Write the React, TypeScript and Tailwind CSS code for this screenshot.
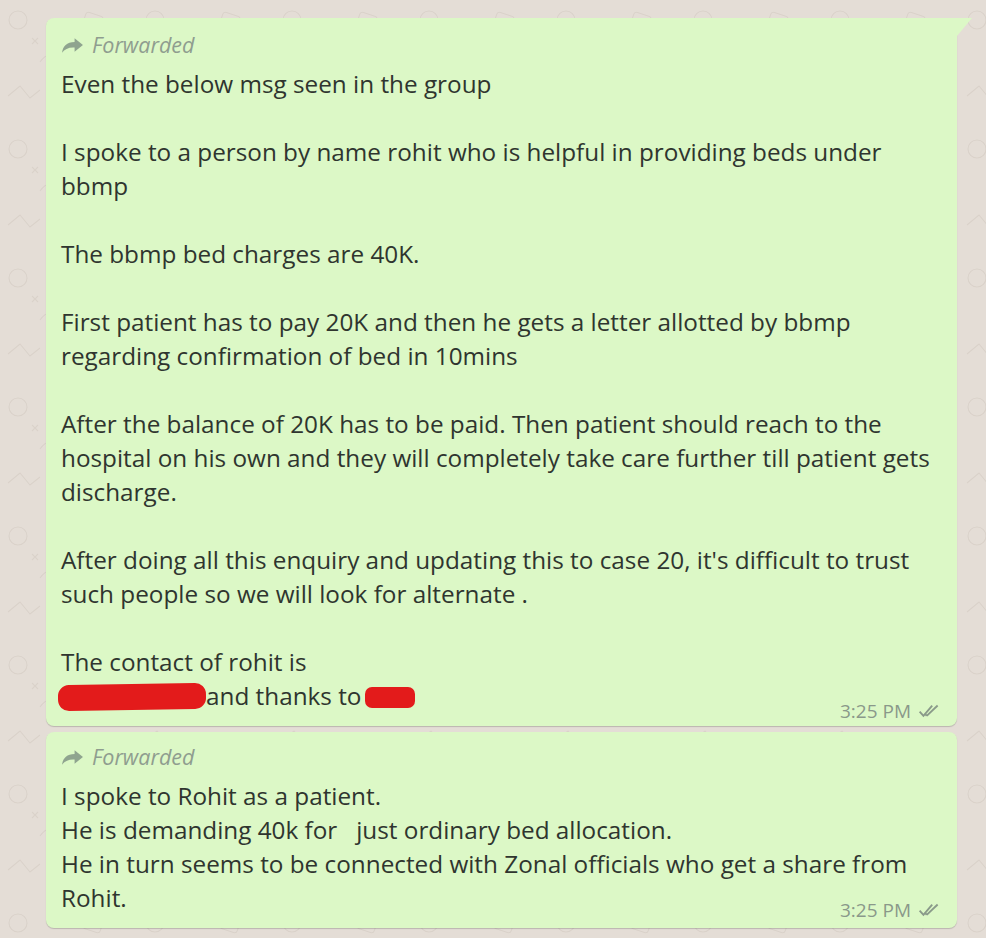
import React from 'react'

const first: string[][] = [
  ['Even the below msg seen in the group'],
  ['I spoke to a person by name rohit who is helpful in providing beds under', 'bbmp'],
  ['The bbmp bed charges are 40K.'],
  ['First patient has to pay 20K and then he gets a letter allotted by bbmp', 'regarding confirmation of bed in 10mins'],
  [
    'After the balance of 20K has to be paid. Then patient should reach to the',
    'hospital on his own and they will completely take care further till patient gets',
    'discharge.',
  ],
  ["After doing all this enquiry and updating this to case 20, it's difficult to trust", 'such people so we will look for alternate .'],
]

const second = [
  'I spoke to Rohit as a patient.',
  'He is demanding 40k for \u00a0 just ordinary bed allocation.',
  'He in turn seems to be connected with Zonal officials who get a share from',
  'Rohit.',
]

function ForwardIcon() {
  return (
    <svg width="23" height="17" viewBox="0 0 22 16" className="shrink-0">
      <path d="M13 1 L21 7.5 L13 14 L13 10 C7.5 9.6 3.5 11.5 1 15 C1.8 8.5 5.5 4.8 13 4.6 Z" fill="#8fa48f" />
    </svg>
  )
}

function Ticks() {
  return (
    <svg width="24" height="16" viewBox="0 0 22 14" className="shrink-0">
      <path d="M1.5 7.5 L5 11.5 L13 2" stroke="#8a9a8a" strokeWidth="1.7" fill="none" />
      <path d="M8 11.5 L18 2" stroke="#8a9a8a" strokeWidth="1.7" fill="none" />
      <path d="M6.5 9.5 L8 11.5" stroke="#8a9a8a" strokeWidth="1.7" fill="none" />
    </svg>
  )
}

function Forwarded() {
  return (
    <div className="flex items-center gap-[8px] h-[22px] text-[21.5px] italic text-[#8f9d8f]">
      <ForwardIcon />
      <span>Forwarded</span>
    </div>
  )
}

function Stamp() {
  return (
    <div className="flex items-center justify-end gap-[7px] h-[22px] text-[19px] text-[#8a988a]">
      <span>3:25 PM</span>
      <Ticks />
    </div>
  )
}

// faint doodle wallpaper behind the chat
function Wallpaper() {
  return (
    <svg className="absolute inset-0" width="986" height="938">
      <defs>
        <pattern id="doodle" width="137" height="129" patternUnits="userSpaceOnUse">
          <g fill="none" stroke="#dad2ca" strokeWidth="1.1">
            <circle cx="18" cy="20" r="9" />
            <path d="M40 62 q10 -14 20 0 t20 0" />
            <rect x="84" y="14" width="18" height="14" rx="3" transform="rotate(18 93 21)" />
            <path d="M8 96 l12 -10 l10 12 l10 -8" />
            <circle cx="104" cy="98" r="5" />
            <path d="M62 108 c6 8 14 8 20 0" />
            <path d="M32 38 l6 6 m0 -6 l-6 6" />
            <path d="M112 58 c8 -6 16 4 8 10 c-6 4 -12 -2 -8 -10" />
          </g>
        </pattern>
      </defs>
      <rect width="986" height="938" fill="url(#doodle)" />
    </svg>
  )
}

export default function App() {
  return (
    <div
      className="relative w-[986px] h-[938px] bg-[#e4ddd6] overflow-hidden pt-[18px] pl-[46px] text-[#2f352f]"
      style={{ fontFamily: '"Open Sans", "Noto Sans", sans-serif' }}
    >
      <Wallpaper />

      {/* first bubble */}
      <div className="relative w-[911px] bg-[#dcf8c6] rounded-[8px] rounded-tr-none shadow-[0_1px_1px_rgba(0,0,0,0.18)] pl-[15px] pr-[15px] pt-[16px] pb-[4px]">
        <div className="absolute top-0 right-[-15px] w-0 h-0 border-t-[18px] border-t-[#dcf8c6] border-r-[15px] border-r-transparent" />
        <Forwarded />
        <div className="mt-[11px] text-[24.3px] leading-[34px]">
          {first.map((para, i) => (
            <div key={i} className={i > 0 ? 'mt-[34px]' : ''}>
              {para.map((l) => (
                <div key={l} className="whitespace-nowrap">{l}</div>
              ))}
            </div>
          ))}
          <div className="mt-[34px] whitespace-nowrap">The contact of rohit is</div>
          <div className="flex items-center whitespace-nowrap h-[34px]">
            <span className="inline-block w-[148px] h-[26px] bg-[#e31b1b] rounded-[11px] -ml-[3px] mt-[2px] -rotate-1" />
            <span>and thanks to</span>
            <span className="inline-block w-[50px] h-[21px] bg-[#e31b1b] rounded-[7px] ml-[4px] mt-[2px]" />
          </div>
        </div>
        <div className="-mt-[13px]">
          <Stamp />
        </div>
      </div>

      {/* second bubble */}
      <div className="relative mt-[6px] w-[911px] bg-[#dcf8c6] rounded-[8px] shadow-[0_1px_1px_rgba(0,0,0,0.18)] pl-[15px] pr-[15px] pt-[14px] pb-[7px]">
        <Forwarded />
        <div className="mt-[11px] text-[24.3px] leading-[34px]">
          {second.map((l) => (
            <div key={l} className="whitespace-nowrap">{l}</div>
          ))}
        </div>
        <div className="-mt-[16px]">
          <Stamp />
        </div>
      </div>
    </div>
  )
}
